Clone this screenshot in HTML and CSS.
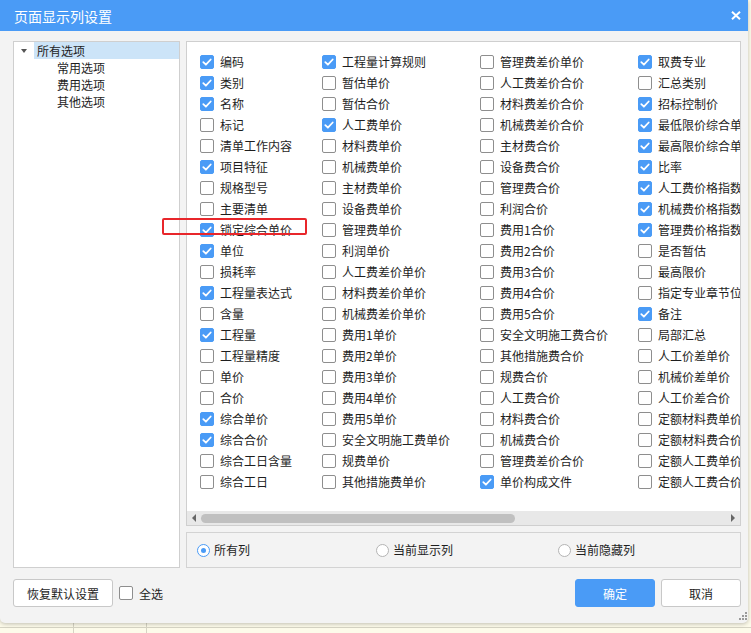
FILE: index.html
```html
<!DOCTYPE html>
<html lang="zh">
<head>
<meta charset="utf-8">
<title>页面显示列设置</title>
<link rel="stylesheet" href="styles.css">
</head>
<body>
<div class="dialog">
  <div class="titlebar">
    <span class="title">页面显示列设置</span>
    <svg class="close" width="10" height="9" viewBox="0 0 10 9"><path d="M1 0.8 L9 8.2 M9 0.8 L1 8.2" stroke="#fff" stroke-width="2"/></svg>
  </div>
  <div class="content">
    <div class="main">
      <div class="tree">
        <div class="node root"><span class="caret"></span><span class="label sel">所有选项</span></div>
        <div class="node child">常用选项</div>
        <div class="node child">费用选项</div>
        <div class="node child">其他选项</div>
      </div>
      <div class="rightcol">
        <div class="listpanel">
          <div class="list">
            <div class="item"><span class="cb on"><svg viewBox="0 0 14 14"><path d="M3.3 7.2 L5.9 9.7 L10.7 4.5"/></svg></span>编码</div>
            <div class="item"><span class="cb on"><svg viewBox="0 0 14 14"><path d="M3.3 7.2 L5.9 9.7 L10.7 4.5"/></svg></span>类别</div>
            <div class="item"><span class="cb on"><svg viewBox="0 0 14 14"><path d="M3.3 7.2 L5.9 9.7 L10.7 4.5"/></svg></span>名称</div>
            <div class="item"><span class="cb"></span>标记</div>
            <div class="item"><span class="cb"></span>清单工作内容</div>
            <div class="item"><span class="cb on"><svg viewBox="0 0 14 14"><path d="M3.3 7.2 L5.9 9.7 L10.7 4.5"/></svg></span>项目特征</div>
            <div class="item"><span class="cb"></span>规格型号</div>
            <div class="item"><span class="cb"></span>主要清单</div>
            <div class="item"><span class="cb on"><svg viewBox="0 0 14 14"><path d="M3.3 7.2 L5.9 9.7 L10.7 4.5"/></svg></span>锁定综合单价</div>
            <div class="item"><span class="cb on"><svg viewBox="0 0 14 14"><path d="M3.3 7.2 L5.9 9.7 L10.7 4.5"/></svg></span>单位</div>
            <div class="item"><span class="cb"></span>损耗率</div>
            <div class="item"><span class="cb on"><svg viewBox="0 0 14 14"><path d="M3.3 7.2 L5.9 9.7 L10.7 4.5"/></svg></span>工程量表达式</div>
            <div class="item"><span class="cb"></span>含量</div>
            <div class="item"><span class="cb on"><svg viewBox="0 0 14 14"><path d="M3.3 7.2 L5.9 9.7 L10.7 4.5"/></svg></span>工程量</div>
            <div class="item"><span class="cb"></span>工程量精度</div>
            <div class="item"><span class="cb"></span>单价</div>
            <div class="item"><span class="cb"></span>合价</div>
            <div class="item"><span class="cb on"><svg viewBox="0 0 14 14"><path d="M3.3 7.2 L5.9 9.7 L10.7 4.5"/></svg></span>综合单价</div>
            <div class="item"><span class="cb on"><svg viewBox="0 0 14 14"><path d="M3.3 7.2 L5.9 9.7 L10.7 4.5"/></svg></span>综合合价</div>
            <div class="item"><span class="cb"></span>综合工日含量</div>
            <div class="item"><span class="cb"></span>综合工日</div>

            <div class="item"><span class="cb on"><svg viewBox="0 0 14 14"><path d="M3.3 7.2 L5.9 9.7 L10.7 4.5"/></svg></span>工程量计算规则</div>
            <div class="item"><span class="cb"></span>暂估单价</div>
            <div class="item"><span class="cb"></span>暂估合价</div>
            <div class="item"><span class="cb on"><svg viewBox="0 0 14 14"><path d="M3.3 7.2 L5.9 9.7 L10.7 4.5"/></svg></span>人工费单价</div>
            <div class="item"><span class="cb"></span>材料费单价</div>
            <div class="item"><span class="cb"></span>机械费单价</div>
            <div class="item"><span class="cb"></span>主材费单价</div>
            <div class="item"><span class="cb"></span>设备费单价</div>
            <div class="item"><span class="cb"></span>管理费单价</div>
            <div class="item"><span class="cb"></span>利润单价</div>
            <div class="item"><span class="cb"></span>人工费差价单价</div>
            <div class="item"><span class="cb"></span>材料费差价单价</div>
            <div class="item"><span class="cb"></span>机械费差价单价</div>
            <div class="item"><span class="cb"></span>费用1单价</div>
            <div class="item"><span class="cb"></span>费用2单价</div>
            <div class="item"><span class="cb"></span>费用3单价</div>
            <div class="item"><span class="cb"></span>费用4单价</div>
            <div class="item"><span class="cb"></span>费用5单价</div>
            <div class="item"><span class="cb"></span>安全文明施工费单价</div>
            <div class="item"><span class="cb"></span>规费单价</div>
            <div class="item"><span class="cb"></span>其他措施费单价</div>

            <div class="item"><span class="cb"></span>管理费差价单价</div>
            <div class="item"><span class="cb"></span>人工费差价合价</div>
            <div class="item"><span class="cb"></span>材料费差价合价</div>
            <div class="item"><span class="cb"></span>机械费差价合价</div>
            <div class="item"><span class="cb"></span>主材费合价</div>
            <div class="item"><span class="cb"></span>设备费合价</div>
            <div class="item"><span class="cb"></span>管理费合价</div>
            <div class="item"><span class="cb"></span>利润合价</div>
            <div class="item"><span class="cb"></span>费用1合价</div>
            <div class="item"><span class="cb"></span>费用2合价</div>
            <div class="item"><span class="cb"></span>费用3合价</div>
            <div class="item"><span class="cb"></span>费用4合价</div>
            <div class="item"><span class="cb"></span>费用5合价</div>
            <div class="item"><span class="cb"></span>安全文明施工费合价</div>
            <div class="item"><span class="cb"></span>其他措施费合价</div>
            <div class="item"><span class="cb"></span>规费合价</div>
            <div class="item"><span class="cb"></span>人工费合价</div>
            <div class="item"><span class="cb"></span>材料费合价</div>
            <div class="item"><span class="cb"></span>机械费合价</div>
            <div class="item"><span class="cb"></span>管理费差价合价</div>
            <div class="item"><span class="cb on"><svg viewBox="0 0 14 14"><path d="M3.3 7.2 L5.9 9.7 L10.7 4.5"/></svg></span>单价构成文件</div>

            <div class="item"><span class="cb on"><svg viewBox="0 0 14 14"><path d="M3.3 7.2 L5.9 9.7 L10.7 4.5"/></svg></span>取费专业</div>
            <div class="item"><span class="cb"></span>汇总类别</div>
            <div class="item"><span class="cb on"><svg viewBox="0 0 14 14"><path d="M3.3 7.2 L5.9 9.7 L10.7 4.5"/></svg></span>招标控制价</div>
            <div class="item"><span class="cb on"><svg viewBox="0 0 14 14"><path d="M3.3 7.2 L5.9 9.7 L10.7 4.5"/></svg></span>最低限价综合单价</div>
            <div class="item"><span class="cb on"><svg viewBox="0 0 14 14"><path d="M3.3 7.2 L5.9 9.7 L10.7 4.5"/></svg></span>最高限价综合单价</div>
            <div class="item"><span class="cb on"><svg viewBox="0 0 14 14"><path d="M3.3 7.2 L5.9 9.7 L10.7 4.5"/></svg></span>比率</div>
            <div class="item"><span class="cb on"><svg viewBox="0 0 14 14"><path d="M3.3 7.2 L5.9 9.7 L10.7 4.5"/></svg></span>人工费价格指数</div>
            <div class="item"><span class="cb on"><svg viewBox="0 0 14 14"><path d="M3.3 7.2 L5.9 9.7 L10.7 4.5"/></svg></span>机械费价格指数</div>
            <div class="item"><span class="cb on"><svg viewBox="0 0 14 14"><path d="M3.3 7.2 L5.9 9.7 L10.7 4.5"/></svg></span>管理费价格指数</div>
            <div class="item"><span class="cb"></span>是否暂估</div>
            <div class="item"><span class="cb"></span>最高限价</div>
            <div class="item"><span class="cb"></span>指定专业章节位置</div>
            <div class="item"><span class="cb on"><svg viewBox="0 0 14 14"><path d="M3.3 7.2 L5.9 9.7 L10.7 4.5"/></svg></span>备注</div>
            <div class="item"><span class="cb"></span>局部汇总</div>
            <div class="item"><span class="cb"></span>人工价差单价</div>
            <div class="item"><span class="cb"></span>机械价差单价</div>
            <div class="item"><span class="cb"></span>人工价差合价</div>
            <div class="item"><span class="cb"></span>定额材料费单价</div>
            <div class="item"><span class="cb"></span>定额材料费合价</div>
            <div class="item"><span class="cb"></span>定额人工费单价</div>
            <div class="item"><span class="cb"></span>定额人工费合价</div>
          </div>
          <div class="hscroll">
            <span class="arrow left"></span>
            <div class="track"><span class="thumb"></span></div>
            <span class="arrow right"></span>
          </div>
        </div>
        <div class="radiopanel">
          <label class="radio"><span class="dot on"></span>所有列</label>
          <label class="radio"><span class="dot"></span>当前显示列</label>
          <label class="radio"><span class="dot"></span>当前隐藏列</label>
        </div>
      </div>
    </div>
    <div class="footer">
      <div class="footleft">
        <button class="btn">恢复默认设置</button>
        <div class="item selall"><span class="cb"></span>全选</div>
      </div>
      <div class="footright">
        <button class="btn primary">确定</button>
        <button class="btn">取消</button>
      </div>
    </div>
  </div>
  <div class="redmark"></div>
  <svg class="grip" width="9" height="9" viewBox="0 0 9 9" fill="#9a9a9a"><rect x="6" y="0" width="2" height="2"/><rect x="3" y="3" width="2" height="2"/><rect x="6" y="3" width="2" height="2"/><rect x="0" y="6" width="2" height="2"/><rect x="3" y="6" width="2" height="2"/><rect x="6" y="6" width="2" height="2"/></svg>
</div>
</body>
</html>
```
FILE: styles.css
```css
html, body {
  margin: 0;
  padding: 0;
}
body {
  width: 751px;
  height: 633px;
  overflow: hidden;
  font-family: "Noto Sans CJK SC", "Noto Sans", "Liberation Sans", sans-serif;
  font-size: 12px;
  color: #1e1e1e;
  background-color: #fdfbea;
  background-image:
    linear-gradient(#d6d4c4, #d6d4c4),
    linear-gradient(#d6d4c4, #d6d4c4),
    linear-gradient(#d6d4c4, #d6d4c4);
  background-size: 100% 1px, 1px 100%, 1px 100%;
  background-position: 0 627px, 73px 0, 146px 0;
  background-repeat: no-repeat;
}
.dialog {
  position: relative;
  width: 748px;
  height: 623px;
  background: #f3f3f3;
  border-radius: 0 0 5px 5px;
  box-shadow: 0 1px 4px rgba(0,0,0,0.25);
  display: flex;
  flex-direction: column;
}
.titlebar {
  height: 31px;
  flex: none;
  background: #4a9bf6;
  display: flex;
  align-items: center;
  justify-content: space-between;
  padding: 0 7px 0 14px;
}
.title {
  color: #fff;
  font-size: 14px;
  line-height: 20px;
}
.close {
  display: block;
}
.content {
  padding: 10px 7px 0 13px;
  display: flex;
  flex-direction: column;
}
.main {
  display: flex;
  gap: 6px;
  height: 527px;
}
.tree {
  width: 167px;
  box-sizing: border-box;
  border: 1px solid #cfcfcf;
  background: #fff;
}
.node {
  height: 17px;
  line-height: 17px;
  white-space: nowrap;
}
.root {
  display: flex;
  align-items: center;
}
.caret {
  width: 0;
  height: 0;
  border-left: 3.5px solid transparent;
  border-right: 3.5px solid transparent;
  border-top: 4px solid #555;
  margin: 0 7px;
}
.label.sel {
  flex: 1;
  background: #cce4f8;
  padding-left: 3px;
  height: 17px;
}
.child {
  padding-left: 43px;
}
.rightcol {
  width: 555px;
  display: flex;
  flex-direction: column;
  gap: 6px;
}
.listpanel {
  height: 485px;
  box-sizing: border-box;
  border: 1px solid #cfcfcf;
  background: #fff;
  display: flex;
  flex-direction: column;
  overflow: hidden;
}
.list {
  flex: 1;
  overflow: hidden;
  padding: 9px 0 0 13px;
  display: grid;
  grid-auto-flow: column;
  grid-template-rows: repeat(21, 21px);
  grid-template-columns: 122px 158px 158px 158px;
  align-content: start;
}
.item {
  display: flex;
  align-items: center;
  gap: 6px;
  height: 21px;
  line-height: 21px;
  white-space: nowrap;
}
.cb {
  flex: none;
  width: 14px;
  height: 14px;
  box-sizing: border-box;
  border: 1px solid #8e8e8e;
  border-radius: 2px;
  background: #fff;
  display: flex;
}
.cb.on {
  background: #4a9bf6;
  border-color: #4a9bf6;
}
.cb svg {
  width: 14px;
  height: 14px;
  margin: -1px;
}
.cb svg path {
  fill: none;
  stroke: #fff;
  stroke-width: 1.8;
  stroke-linecap: round;
  stroke-linejoin: round;
}
.hscroll {
  height: 14px;
  flex: none;
  background: #e8e8e8;
  display: flex;
  align-items: center;
}
.arrow {
  width: 0;
  height: 0;
  border-top: 4px solid transparent;
  border-bottom: 4px solid transparent;
  flex: none;
  margin: 0 5px;
}
.arrow.left {
  border-right: 4px solid #666;
}
.arrow.right {
  border-left: 4px solid #666;
}
.track {
  flex: 1;
  height: 10px;
  display: flex;
  align-items: center;
}
.thumb {
  width: 314px;
  height: 9px;
  border-radius: 5px;
  background: #c0c0c0;
}
.radiopanel {
  height: 36px;
  box-sizing: border-box;
  border: 1px solid #d3d3d3;
  display: grid;
  grid-template-columns: 179px 182px auto;
  align-items: center;
  padding-left: 10px;
}
.radio {
  display: flex;
  align-items: center;
  gap: 4px;
  line-height: 20px;
}
.dot {
  width: 13px;
  height: 13px;
  box-sizing: border-box;
  border-radius: 50%;
  border: 1px solid #b4b4b4;
  background: #fff;
  display: flex;
  align-items: center;
  justify-content: center;
}
.dot.on {
  border-color: #4a9bf6;
}
.dot.on::after {
  content: "";
  width: 5px;
  height: 5px;
  border-radius: 50%;
  background: #4a9bf6;
}
.footer {
  margin-top: 11px;
  display: flex;
  justify-content: space-between;
  align-items: center;
}
.footleft, .footright {
  display: flex;
  align-items: center;
  gap: 6px;
}
.btn {
  font: inherit;
  font-size: 12px;
  color: #1e1e1e;
  height: 28px;
  width: 80px;
  box-sizing: border-box;
  border: 1px solid #c8c8c8;
  border-radius: 3px;
  background: #fff;
  padding: 0;
}
.footleft .btn {
  width: 100px;
}
.btn.primary {
  background: #4a9bf6;
  border-color: #4a9bf6;
  color: #fff;
}
.redmark {
  position: absolute;
  left: 162px;
  top: 218px;
  width: 145px;
  height: 17px;
  box-sizing: border-box;
  border: 2px solid #e8262b;
  border-radius: 2px;
}
.grip {
  position: absolute;
  right: 0;
  bottom: 2px;
}
```
